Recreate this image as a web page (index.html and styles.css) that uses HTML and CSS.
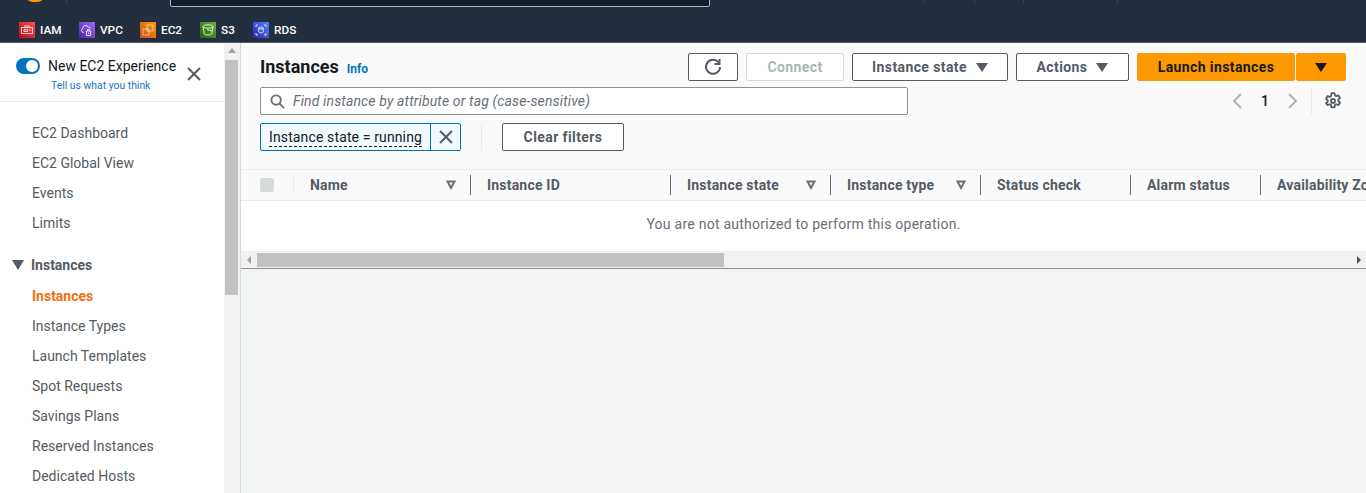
FILE: index.html
```html
<!DOCTYPE html>
<html>

<head>
    <meta charset="utf-8">
    <title>Instances | EC2</title>
    <link rel="stylesheet" href="styles.css">
</head>

<body>
<header class="topbar">
    <div class="topbar-cut">
        <div class="logo-swoosh"></div>
        <div class="cut-line cut-logo"></div>
        <div class="cut-search"></div>
        <div class="cut-line cut-a"></div>
        <div class="cut-line cut-b"></div>
        <div class="cut-line cut-c"></div>
        <div class="cut-line cut-d"></div>
    </div>
    <nav class="favorites">
        <a class="fav fav-iam">
            <svg class="fav-icon" viewBox="0 0 16 16"><defs><linearGradient id="gi" x1="0" y1="1" x2="1" y2="0"><stop offset="0" stop-color="#bd0816"/><stop offset="1" stop-color="#ff5252"/></linearGradient></defs><rect width="16" height="16" fill="url(#gi)"/><path d="M2.500 5.500h11v6h-11zM5 4h6M5 7.500h3.500v2H5zM10 8h2" fill="none" stroke="#fff" stroke-width=".8"/></svg>
            IAM
        </a>
        <a class="fav fav-vpc">
            <svg class="fav-icon" viewBox="0 0 16 16"><defs><linearGradient id="gv" x1="0" y1="1" x2="1" y2="0"><stop offset="0" stop-color="#4d27a8"/><stop offset="1" stop-color="#a166ff"/></linearGradient></defs><rect width="16" height="16" fill="url(#gv)"/><path d="M5 10.500H4.500a2 2 0 0 1-.5-3.900 2.500 2.500 0 0 1 4.800-1.400 2 2 0 0 1 2.700 1.300M7.500 9v4.500h4V9zM8.500 9V7.500h2V9M9.500 10.500v1.500" fill="none" stroke="#fff" stroke-width=".8"/></svg>
            VPC
        </a>
        <a class="fav fav-ec2">
            <svg class="fav-icon" viewBox="0 0 16 16"><defs><linearGradient id="ge" x1="0" y1="1" x2="1" y2="0"><stop offset="0" stop-color="#c8511b"/><stop offset="1" stop-color="#ff9900"/></linearGradient></defs><rect width="16" height="16" fill="url(#ge)"/><path d="M7 3h6v6H7zM3 7h6v6H3z" fill="none" stroke="#fff" stroke-opacity=".7" stroke-width=".8"/></svg>
            EC2
        </a>
        <a class="fav fav-s3">
            <svg class="fav-icon" viewBox="0 0 16 16"><defs><linearGradient id="gs" x1="0" y1="1" x2="1" y2="0"><stop offset="0" stop-color="#1b660f"/><stop offset="1" stop-color="#6cae3e"/></linearGradient></defs><rect width="16" height="16" fill="url(#gs)"/><ellipse cx="8" cy="4.500" rx="5" ry="1.700" fill="none" stroke="#fff" stroke-width=".8"/><path d="M3 4.500l1.300 7.500c.5 1.300 6.900 1.300 7.400 0L13 4.500M7 7.500l5 1.500" fill="none" stroke="#fff" stroke-width=".8"/></svg>
            S3
        </a>
        <a class="fav fav-rds">
            <svg class="fav-icon" viewBox="0 0 16 16"><defs><linearGradient id="gr" x1="0" y1="1" x2="1" y2="0"><stop offset="0" stop-color="#2e27ad"/><stop offset="1" stop-color="#527fff"/></linearGradient></defs><rect width="16" height="16" fill="url(#gr)"/><path d="M3 3h2M11 3h2M3 13h2M11 13h2M3 3v2M13 3v2M3 11v2M13 11v2" stroke="#fff" stroke-width=".8" fill="none"/><ellipse cx="8" cy="6" rx="2.200" ry="1" fill="none" stroke="#fff" stroke-width=".8"/><path d="M5.800 6v4c0 1.300 4.400 1.300 4.400 0V6" fill="none" stroke="#fff" stroke-width=".8"/></svg>
            RDS
        </a>
    </nav>
</header>

<div class="shell">
    <aside class="sidebar">
        <div class="sidebar-scroll">
            <div class="experience">
                <div class="experience-text">
                    <div class="experience-row">
                        <span class="toggle"><span class="toggle-knob"></span></span>
                        New EC2 Experience
                    </div>
                    <a class="feedback">Tell us what you think</a>
                </div>
                <svg class="close-icon" viewBox="0 0 14 14"><path d="M1 1l12 12M13 1L1 13" stroke="#545b64" stroke-width="2" fill="none"/></svg>
            </div>
            <ul class="nav-list nav-first">
                <li>EC2 Dashboard</li>
                <li>EC2 Global View</li>
                <li>Events</li>
                <li>Limits</li>
            </ul>
            <div class="nav-section">
                <svg class="caret" viewBox="0 0 12 10"><path d="M0 0h12L6 10z" fill="#545b64"/></svg>
                Instances
            </div>
            <ul class="nav-list">
                <li class="active">Instances</li>
                <li>Instance Types</li>
                <li>Launch Templates</li>
                <li>Spot Requests</li>
                <li>Savings Plans</li>
                <li>Reserved Instances</li>
                <li>Dedicated Hosts</li>
            </ul>
        </div>
        <div class="side-scrollbar">
            <div class="side-arrow"></div>
            <div class="side-thumb"></div>
        </div>
    </aside>

    <main class="content">
        <section class="panel">
            <div class="panel-head">
                <div class="title-row">
                    <h1>Instances</h1>
                    <a class="info">Info</a>
                </div>
                <div class="actions">
                    <button class="btn btn-refresh">
                        <svg class="refresh-icon" viewBox="0 0 18 18"><path d="M14.500 4.500A7 7 0 1 0 16 9" fill="none" stroke="#545b64" stroke-width="2"/><path d="M15.500 1v5h-5" fill="none" stroke="#545b64" stroke-width="2"/></svg>
                    </button>
                    <button class="btn btn-disabled w-connect">Connect</button>
                    <button class="btn w-state">Instance state <span class="arrow"></span></button>
                    <button class="btn w-actions">Actions <span class="arrow"></span></button>
                    <div class="split">
                        <button class="btn btn-primary w-launch">Launch instances</button>
                        <button class="btn btn-primary w-drop"><span class="arrow arrow-dark"></span></button>
                    </div>
                </div>
            </div>

            <div class="search-row">
                <div class="search">
                    <svg class="search-icon" viewBox="0 0 16 16"><circle cx="6.500" cy="6.500" r="5" fill="none" stroke="#687078" stroke-width="2"/><path d="M10 10l5 5" stroke="#687078" stroke-width="2"/></svg>
                    <span class="placeholder">Find instance by attribute or tag (case-sensitive)</span>
                </div>
                <div class="pager">
                    <svg class="pager-arrow" viewBox="0 0 12 16"><path d="M10 1L3 8l7 7" fill="none" stroke="#aab7b8" stroke-width="2"/></svg>
                    <span class="page-num">1</span>
                    <svg class="pager-arrow" viewBox="0 0 12 16"><path d="M2 1l7 7-7 7" fill="none" stroke="#aab7b8" stroke-width="2"/></svg>
                    <span class="pager-sep"></span>
                    <svg class="gear-icon" viewBox="0 0 16 16"><path d="M6.700 1h2.600l.4 2 1.200.7 2-.7 1.300 2.300-1.500 1.300v1.400l1.500 1.300-1.300 2.300-2-.7-1.200.7-.4 2H6.700l-.4-2-1.200-.7-2 .7L1.800 10l1.500-1.300V7.300L1.800 6l1.300-2.300 2 .7 1.200-.7z" fill="none" stroke="#545b64" stroke-width="1.600" stroke-linejoin="round"/><circle cx="8" cy="8" r="1.800" fill="none" stroke="#545b64" stroke-width="1.600"/></svg>
                </div>
            </div>

            <div class="filter-row">
                <div class="token">
                    <span class="token-label"><span class="token-text">Instance state = running</span></span>
                    <span class="token-close">
                        <svg class="token-x" viewBox="0 0 14 14"><path d="M1 1l12 12M13 1L1 13" stroke="#545b64" stroke-width="2" fill="none"/></svg>
                    </span>
                </div>
                <span class="filter-sep"></span>
                <button class="btn w-clear">Clear filters</button>
            </div>

            <div class="table-head">
                <div class="col col-check"><span class="checkbox"></span></div>
                <div class="col col-name">Name <svg class="sort" viewBox="0 0 12 10"><path d="M2.500 1.500h7L6 8z" fill="none" stroke="#687078" stroke-width="2"/></svg></div>
                <div class="col col-id">Instance ID</div>
                <div class="col col-state">Instance state <svg class="sort" viewBox="0 0 12 10"><path d="M2.500 1.500h7L6 8z" fill="none" stroke="#687078" stroke-width="2"/></svg></div>
                <div class="col col-type">Instance type <svg class="sort" viewBox="0 0 12 10"><path d="M2.500 1.500h7L6 8z" fill="none" stroke="#687078" stroke-width="2"/></svg></div>
                <div class="col col-status">Status check</div>
                <div class="col col-alarm">Alarm status</div>
                <div class="col col-zone">Availability Zone</div>
            </div>
            <div class="table-message">You are not authorized to perform this operation.</div>
            <div class="h-scroll">
                <span class="h-arrow h-left"></span>
                <div class="h-track"><div class="h-thumb"></div></div>
                <span class="h-arrow h-right"></span>
            </div>
        </section>
    </main>
</div>
</body>

</html>
```

FILE: styles.css
```css
* {
    box-sizing: border-box;
}

html,
body {
    height: 100%;
}

body {
    margin: 0;
    overflow: hidden;
    font-family: Roboto, "Noto Sans", sans-serif;
    font-size: 14px;
    color: #16191f;
    background-color: #f2f3f3;
}

/* top navigation, only the lower part of it is in view */
.topbar {
    height: 43px;
    background-color: #232f3e;
    border-bottom: 1px solid #545b64;
}

.topbar-cut {
    position: relative;
    height: 7px;
}

.logo-swoosh {
    position: absolute;
    left: 25px;
    top: -6px;
    width: 20px;
    height: 8px;
    background-color: #f90;
    border-radius: 0 0 10px 10px;
}

.cut-line {
    position: absolute;
    top: 0;
    width: 1px;
    height: 3px;
    background-color: #414750;
}

.cut-logo { left: 66px; }
.cut-a { left: 923px; }
.cut-b { left: 974px; }
.cut-c { left: 1023px; }
.cut-d { left: 1117px; }

.cut-search {
    position: absolute;
    left: 170px;
    top: -2px;
    width: 540px;
    height: 9px;
    background-color: #161e2d;
    border: 1px solid #aab7b8;
    border-radius: 2px;
}

.favorites {
    display: flex;
    align-items: center;
    height: 20px;
    margin-top: 13px;
    padding-left: 19px;
}

.fav {
    display: flex;
    align-items: center;
    gap: 5px;
    color: #fff;
    font-size: 11.800px;
    font-weight: 500;
}

.fav-iam { width: 60px; }
.fav-vpc { width: 61px; }
.fav-ec2 { width: 60px; }
.fav-s3 { width: 53px; }

.fav-icon {
    width: 16px;
    height: 16px;
    flex: none;
}

.shell {
    display: flex;
    height: 450px;
}

/* side navigation */
.sidebar {
    display: flex;
    flex: none;
    width: 241px;
    border-right: 1px solid #d5dbdb;
    background-color: #fff;
}

.sidebar-scroll {
    flex: none;
    width: 224px;
}

.experience {
    display: flex;
    align-items: flex-start;
    height: 59px;
    padding: 14px 0 0 16px;
    border-bottom: 1px solid #eaeded;
}

.experience-text {
    width: 171px;
}

.experience-row {
    display: flex;
    align-items: center;
    gap: 8px;
    height: 18px;
    white-space: nowrap;
}

.toggle {
    display: block;
    flex: none;
    width: 24px;
    height: 16px;
    padding: 2px;
    border-radius: 8px;
    background-color: #0073bb;
}

.toggle-knob {
    display: block;
    width: 12px;
    height: 12px;
    margin-left: 8px;
    border-radius: 50%;
    background-color: #fff;
}

.feedback {
    display: block;
    margin: 4px 0 0 35px;
    color: #1a73c5;
    font-size: 10.400px;
    line-height: 14px;
    white-space: nowrap;
}

.close-icon {
    width: 14px;
    height: 14px;
    margin-top: 10px;
}

.nav-list {
    margin: 0;
    padding: 0 0 0 32px;
    list-style: none;
}

.nav-list li {
    height: 30px;
    line-height: 30px;
    color: #545b64;
    white-space: nowrap;
}

.nav-first {
    margin-top: 16px;
}

.nav-list .active {
    color: #ec7211;
    font-weight: 700;
}

.nav-section {
    display: flex;
    align-items: center;
    gap: 7px;
    height: 30px;
    margin-top: 12px;
    padding-left: 12px;
    color: #545b64;
    font-weight: 700;
}

.nav-section + .nav-list {
    margin-top: 1px;
}

.caret {
    width: 12px;
    height: 10px;
}

.side-scrollbar {
    flex: none;
    width: 16px;
    padding: 0 2px 0 1px;
    background-color: #f1f1f1;
}

.side-arrow {
    width: 0;
    height: 0;
    margin: 5px 0 0 3px;
    border-left: 4px solid transparent;
    border-right: 4px solid transparent;
    border-bottom: 5px solid #a3a3a3;
}

.side-thumb {
    width: 13px;
    height: 235px;
    margin-top: 7px;
    background-color: #c1c1c1;
}

/* main panel */
.content {
    flex: 1;
    min-width: 0;
}

.panel {
    height: 226px;
    padding-top: 10px;
    background-color: #fafafa;
    border-bottom: 2px solid #879596;
}

.panel-head {
    display: flex;
    justify-content: space-between;
    align-items: center;
    height: 28px;
    padding: 0 20px 0 19px;
}

.title-row {
    display: flex;
    align-items: baseline;
    gap: 8px;
    padding-bottom: 2px;
}

h1 {
    margin: 0;
    font-size: 18px;
    font-weight: 700;
    color: #16191f;
}

.info {
    color: #0073bb;
    font-size: 12px;
    font-weight: 700;
}

.actions {
    display: flex;
    gap: 8px;
}

.btn {
    display: flex;
    align-items: center;
    justify-content: center;
    gap: 9px;
    height: 28px;
    padding: 0;
    border: 1px solid #545b64;
    border-radius: 2px;
    background-color: #fff;
    color: #545b64;
    font-family: Roboto, "Noto Sans", sans-serif;
    font-size: 14px;
    font-weight: 700;
    letter-spacing: 0.4px;
}

.btn-refresh { width: 50px; }
.w-connect { width: 98px; }
.w-state { width: 156px; }
.w-actions { width: 113px; }
.w-launch { width: 158px; }
.w-drop { width: 50px; }
.w-clear { width: 122px; }

.btn-disabled {
    border-color: #d5dbdb;
    color: #aab7b8;
}

.btn-primary {
    border-color: #f90;
    background-color: #f90;
    color: #16191f;
}

.split {
    display: flex;
    gap: 1px;
}

.refresh-icon {
    width: 18px;
    height: 18px;
}

.arrow {
    display: block;
    width: 0;
    height: 0;
    border-left: 6px solid transparent;
    border-right: 6px solid transparent;
    border-top: 9px solid #545b64;
}

.arrow-dark {
    border-top-color: #16191f;
}

.search-row {
    display: flex;
    justify-content: space-between;
    align-items: center;
    height: 28px;
    margin-top: 6px;
    padding: 0 24px 0 19px;
}

.search {
    display: flex;
    align-items: center;
    gap: 8px;
    width: 648px;
    height: 28px;
    padding-left: 9px;
    border: 1px solid #879596;
    border-radius: 2px;
    background-color: #fff;
}

.search-icon {
    width: 15px;
    height: 15px;
}

.placeholder {
    color: #687078;
    font-style: italic;
    letter-spacing: 0.14px;
}

.pager {
    display: flex;
    align-items: center;
}

.pager-arrow {
    width: 12px;
    height: 16px;
}

.page-num {
    width: 44px;
    text-align: center;
    font-weight: 500;
}

.pager-sep {
    width: 1px;
    height: 28px;
    margin: 0 12px;
    background-color: #eaeded;
}

.gear-icon {
    width: 18px;
    height: 18px;
}

.filter-row {
    display: flex;
    align-items: center;
    height: 28px;
    margin-top: 8px;
    padding-left: 19px;
}

.token {
    display: flex;
    width: 201px;
    height: 28px;
    border: 1px solid #0073bb;
    border-radius: 2px;
    background-color: #f1faff;
}

.token-label {
    flex: 1;
    padding-left: 8px;
    line-height: 26px;
    letter-spacing: 0.13px;
    white-space: nowrap;
}

.token-text {
    border-bottom: 1px dashed #16191f;
    padding-bottom: 1px;
}

.token-close {
    display: flex;
    align-items: center;
    justify-content: center;
    width: 30px;
    border-left: 1px solid #0073bb;
}

.token-x {
    width: 14px;
    height: 14px;
}

.filter-sep {
    width: 1px;
    height: 28px;
    margin: 0 20px;
    background-color: #eaeded;
}

.table-head {
    display: flex;
    height: 32px;
    margin-top: 18px;
    border-top: 1px solid #eaeded;
    border-bottom: 1px solid #eaeded;
    color: #545b64;
    font-weight: 700;
    letter-spacing: 0.2px;
    overflow: hidden;
}

.col {
    display: flex;
    flex: none;
    align-items: center;
    justify-content: space-between;
    height: 20px;
    margin-top: 5px;
    padding: 0 10px 0 16px;
    border-right: 1px solid #687078;
    white-space: nowrap;
}

.col-check {
    width: 53px;
    padding-left: 19px;
    border-right-color: #eaeded;
}

.col-name { width: 177px; padding-right: 13px; }
.col-id { width: 200px; }
.col-state { width: 160px; padding-right: 13px; }
.col-type { width: 150px; padding-right: 13px; }
.col-status { width: 150px; }
.col-alarm { width: 130px; }
.col-zone { width: 160px; border-right: 0; }

.checkbox {
    display: block;
    width: 14px;
    height: 14px;
    border-radius: 2px;
    background-color: #d5dbdb;
}

.sort {
    width: 12px;
    height: 10px;
}

.table-message {
    height: 50px;
    line-height: 46px;
    text-align: center;
    color: #687078;
    letter-spacing: 0.25px;
    background-color: #fff;
}

.h-scroll {
    display: flex;
    align-items: center;
    height: 17px;
    background-color: #f1f1f1;
}

.h-arrow {
    flex: none;
    width: 0;
    height: 0;
    border-top: 4px solid transparent;
    border-bottom: 4px solid transparent;
}

.h-left {
    margin: 0 4px 0 6px;
    border-right: 4px solid #a3a3a3;
}

.h-right {
    margin: 0 5px 0 6px;
    border-left: 4px solid #505050;
}

.h-track {
    flex: 1;
}

.h-thumb {
    width: 467px;
    height: 14px;
    margin-left: 2px;
    background-color: #c1c1c1;
}
```
